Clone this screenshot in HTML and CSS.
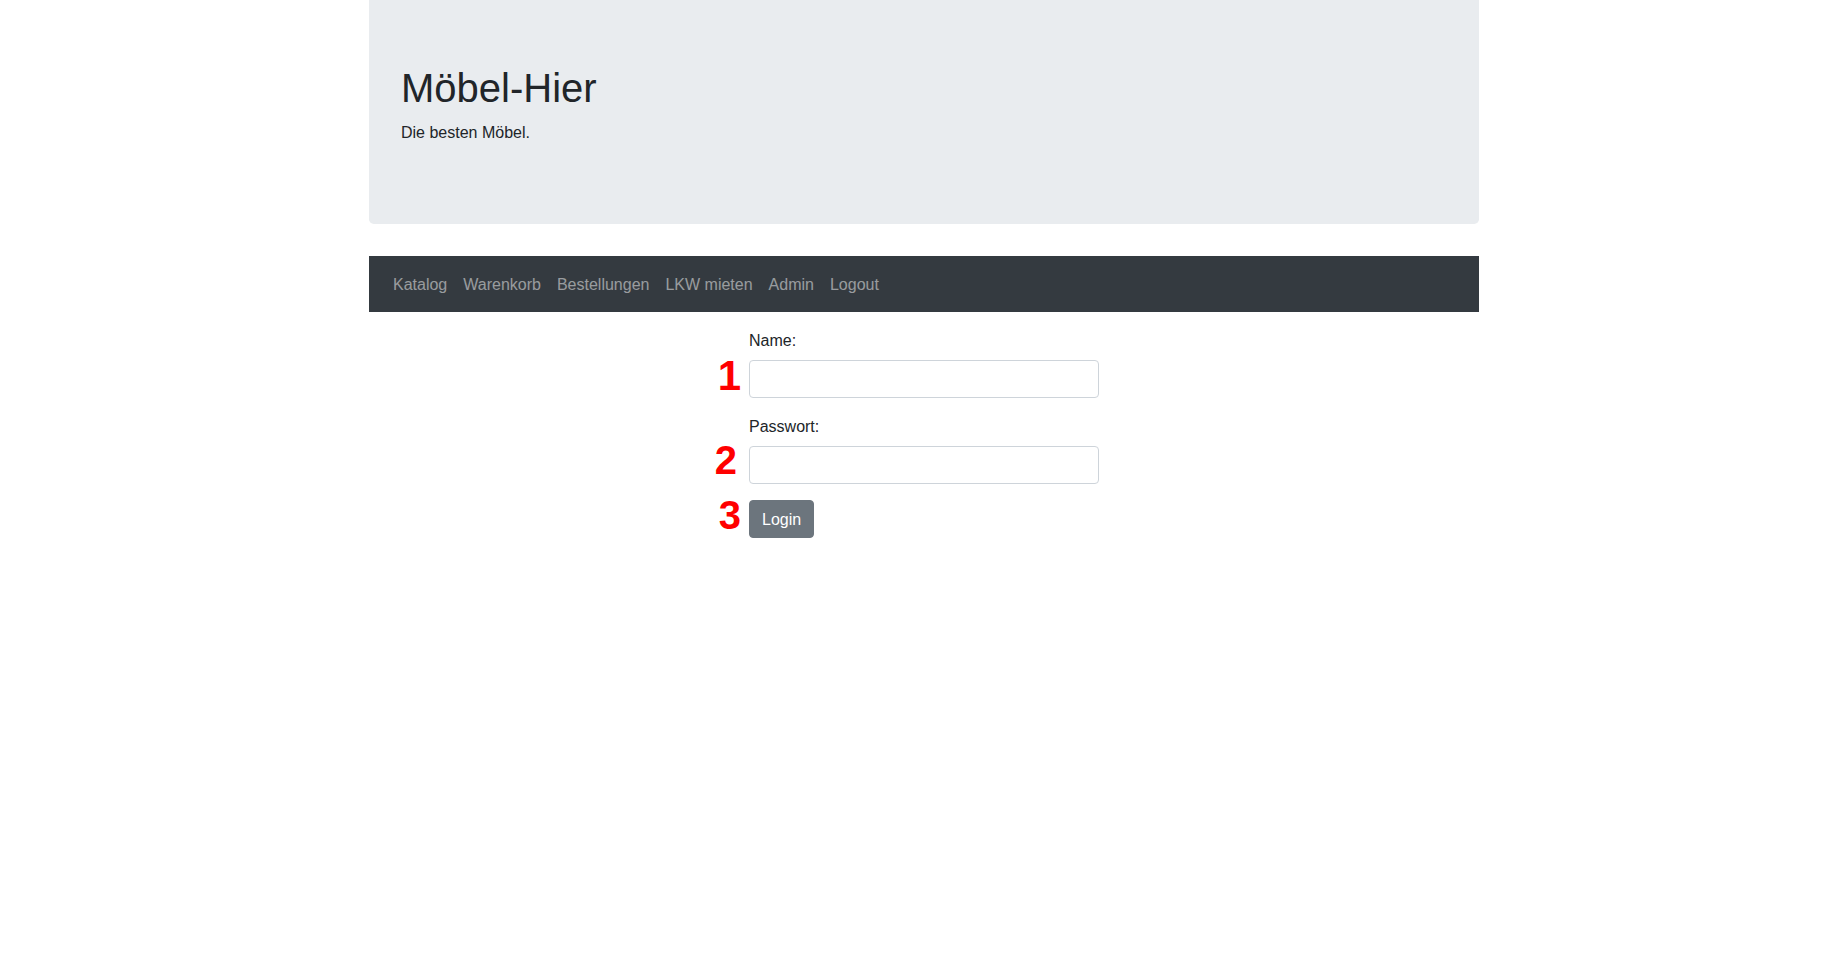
FILE: index.html
```html
<!DOCTYPE html>
<html lang="de">
<head>
<meta charset="utf-8">
<title>Möbel-Hier</title>
<link rel="stylesheet" href="styles.css">
</head>
<body>
<div class="container">
  <header class="jumbotron">
    <h1 class="title">Möbel-Hier</h1>
    <p class="lead">Die besten Möbel.</p>
  </header>
  <nav class="navbar">
    <a class="nav-link" href="#">Katalog</a>
    <a class="nav-link" href="#">Warenkorb</a>
    <a class="nav-link" href="#">Bestellungen</a>
    <a class="nav-link" href="#">LKW mieten</a>
    <a class="nav-link" href="#">Admin</a>
    <a class="nav-link" href="#">Logout</a>
  </nav>
  <form class="login-form">
    <div class="form-group">
      <label class="form-label" for="name">Name:</label>
      <div class="field">
        <span class="marker marker-1">1</span>
        <input class="form-control" id="name" type="text">
      </div>
    </div>
    <div class="form-group">
      <label class="form-label" for="pw">Passwort:</label>
      <div class="field">
        <span class="marker marker-2">2</span>
        <input class="form-control" id="pw" type="password">
      </div>
    </div>
    <div class="field">
      <span class="marker marker-3">3</span>
      <button class="btn" type="button">Login</button>
    </div>
  </form>
</div>
</body>
</html>
```

FILE: styles.css
```css
* { box-sizing: border-box; }
html, body {
  margin: 0;
  padding: 0;
  background: #fff;
}
body {
  font-family: "Liberation Sans", Arial, sans-serif;
  font-size: 16px;
  line-height: 1.5;
  color: #212529;
}
.container {
  width: 1110px;
  margin: 0 auto;
}
.jumbotron {
  background: #e9ecef;
  border-radius: 0 0 4.8px 4.8px;
  padding: 64px 32px;
  margin-bottom: 32px;
}
.title {
  margin: 0 0 8px;
  font-size: 40px;
  font-weight: 400;
  line-height: 1.2;
}
.lead {
  margin: 0 0 16px;
  padding-top: 1px;
  height: 24px;
  font-size: 16px;
}
.navbar {
  background: #343a40;
  display: flex;
  align-items: center;
  padding: 9px 16px 7px;
  height: 56px;
}
.nav-link {
  color: rgba(255, 255, 255, 0.5);
  text-decoration: none;
  padding: 8px 8px;
  line-height: 24px;
}
.login-form {
  width: 350px;
  margin: 16px auto 0;
}
.form-group {
  margin-bottom: 16px;
}
.form-label {
  display: block;
  margin-bottom: 8px;
  padding-top: 1px;
  height: 24px;
  line-height: 24px;
}
.field {
  position: relative;
}
.marker {
  position: absolute;
  right: 100%;
  margin-right: 8px;
  color: #ff0000;
  font-weight: 700;
  font-size: 40px;
  line-height: 1;
}
.marker-1 { top: -5px; font-size: 42px; margin-right: 8px; }
.marker-2 { top: -6px; margin-right: 12px; }
.marker-3 { top: -5px; margin-right: 8px; }
.form-control {
  display: block;
  width: 100%;
  height: 38px;
  padding: 6px 12px;
  font-family: inherit;
  font-size: 16px;
  color: #495057;
  background: #fff;
  border: 1px solid #ced4da;
  border-radius: 4px;
}
.btn {
  display: inline-block;
  height: 38px;
  padding: 7px 12px 5px;
  font-family: inherit;
  font-size: 16px;
  line-height: 24px;
  color: #fff;
  background: #6c757d;
  border: 1px solid #6c757d;
  border-radius: 4px;
}
```
